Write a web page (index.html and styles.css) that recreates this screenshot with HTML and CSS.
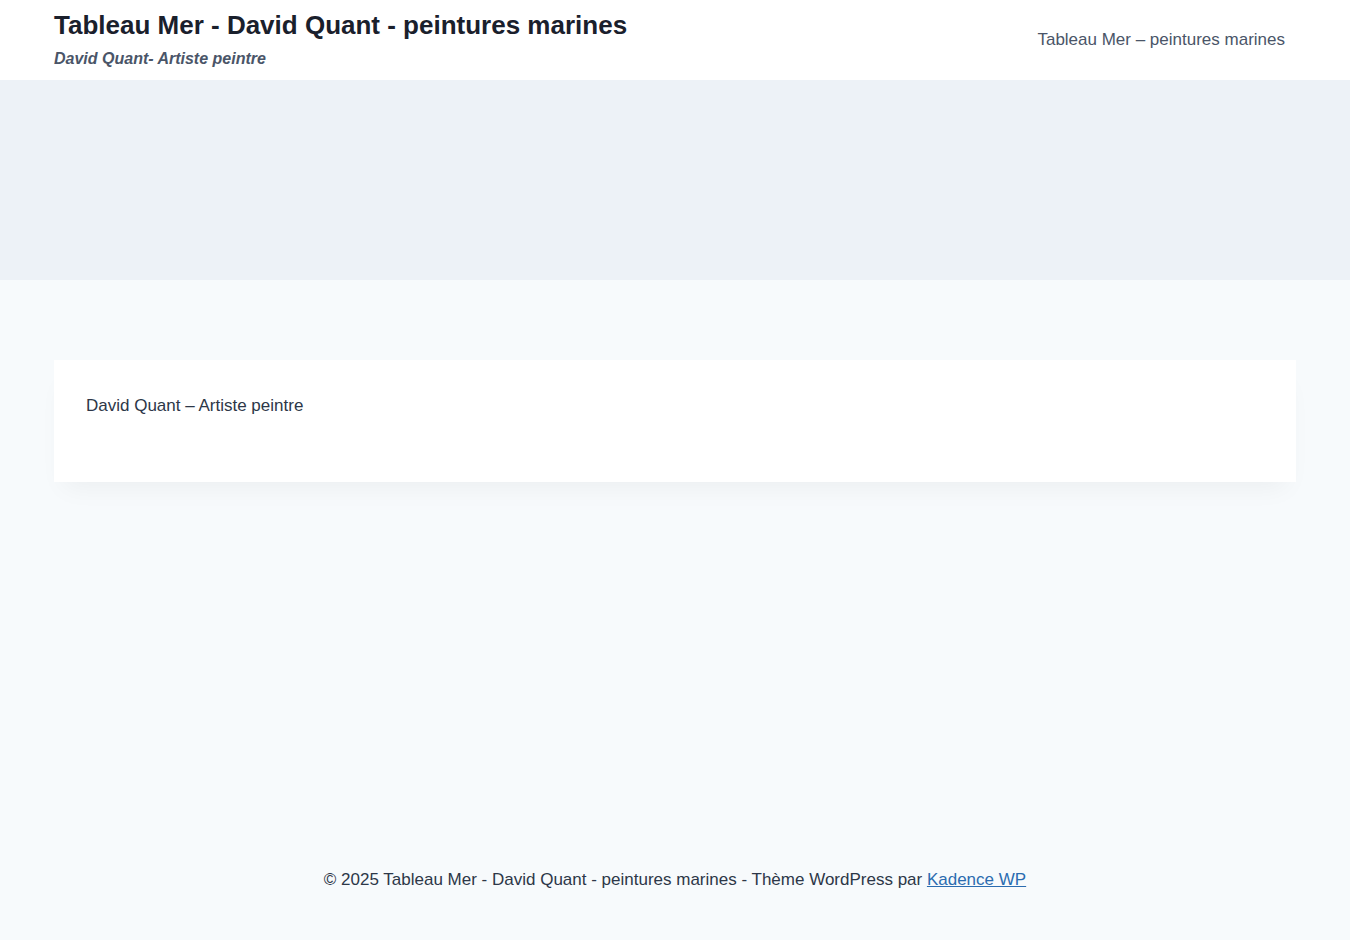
FILE: index.html
```html
<!DOCTYPE html>
<html lang="fr">
<head>
<meta charset="utf-8">
<title>Tableau Mer - David Quant - peintures marines</title>
<link rel="stylesheet" href="styles.css">
</head>
<body>
<div class="site">
  <header class="site-header">
    <div class="container header-row">
      <div class="branding">
        <p class="site-title">Tableau Mer - David Quant - peintures marines</p>
        <p class="site-description">David Quant- Artiste peintre</p>
      </div>
      <nav class="main-nav">
        <a href="#" class="nav-link">Tableau Mer – peintures marines</a>
      </nav>
    </div>
  </header>
  <div class="hero"></div>
  <main class="content-area">
    <div class="container">
      <article class="entry">
        <p class="entry-text">David Quant – Artiste peintre</p>
      </article>
    </div>
  </main>
  <footer class="site-footer">
    <div class="container footer-row">
      <p class="footer-text">© 2025 Tableau Mer - David Quant - peintures marines - Thème WordPress par <a href="#" class="footer-link">Kadence WP</a></p>
    </div>
  </footer>
</div>
</body>
</html>
```
FILE: styles.css
```css
html, body {
  margin: 0;
  padding: 0;
}
body {
  background: #f7fafc;
  font-family: "Liberation Sans", Arial, sans-serif;
  color: #2d3748;
  font-size: 17px;
  line-height: 1.6;
}
p { margin: 0; }
.site {
  min-height: 100vh;
  display: flex;
  flex-direction: column;
}
.container {
  max-width: 1242px;
  margin: 0 auto;
  padding: 0 24px;
  box-sizing: content-box;
}
.site-header {
  background: #ffffff;
  height: 80px;
}
.header-row {
  display: flex;
  justify-content: space-between;
  align-items: center;
  height: 80px;
}
.branding {
  display: flex;
  flex-direction: column;
  margin-top: -2px;
}
.site-title {
  font-size: 26px;
  font-weight: 700;
  line-height: 1.2;
  color: #1a202c;
}
.site-description {
  font-size: 16px;
  font-weight: 700;
  font-style: italic;
  line-height: 1.2;
  color: #4a5568;
  margin-top: 8px;
}
.main-nav {
  padding-right: 11px;
}
.nav-link {
  font-size: 17px;
  color: #4a5568;
  text-decoration: none;
}
.hero {
  background: #edf2f7;
  height: 200px;
}
.content-area {
  padding-top: 80px;
}
.entry {
  background: #ffffff;
  padding: 32px 32px 63px;
  box-shadow: 0 15px 25px -10px rgba(0,0,0,0.05);
}
.entry-text {
  font-size: 17px;
  line-height: 27px;
  color: #2d3748;
}
.site-footer {
  margin-top: auto;
  padding: 0 0 47px;
}
.footer-row {
  display: flex;
  justify-content: center;
}
.footer-text {
  font-size: 17px;
  line-height: 27px;
  color: #2d3748;
}
.footer-link {
  color: #2b6cb0;
  text-decoration: underline;
}
```
